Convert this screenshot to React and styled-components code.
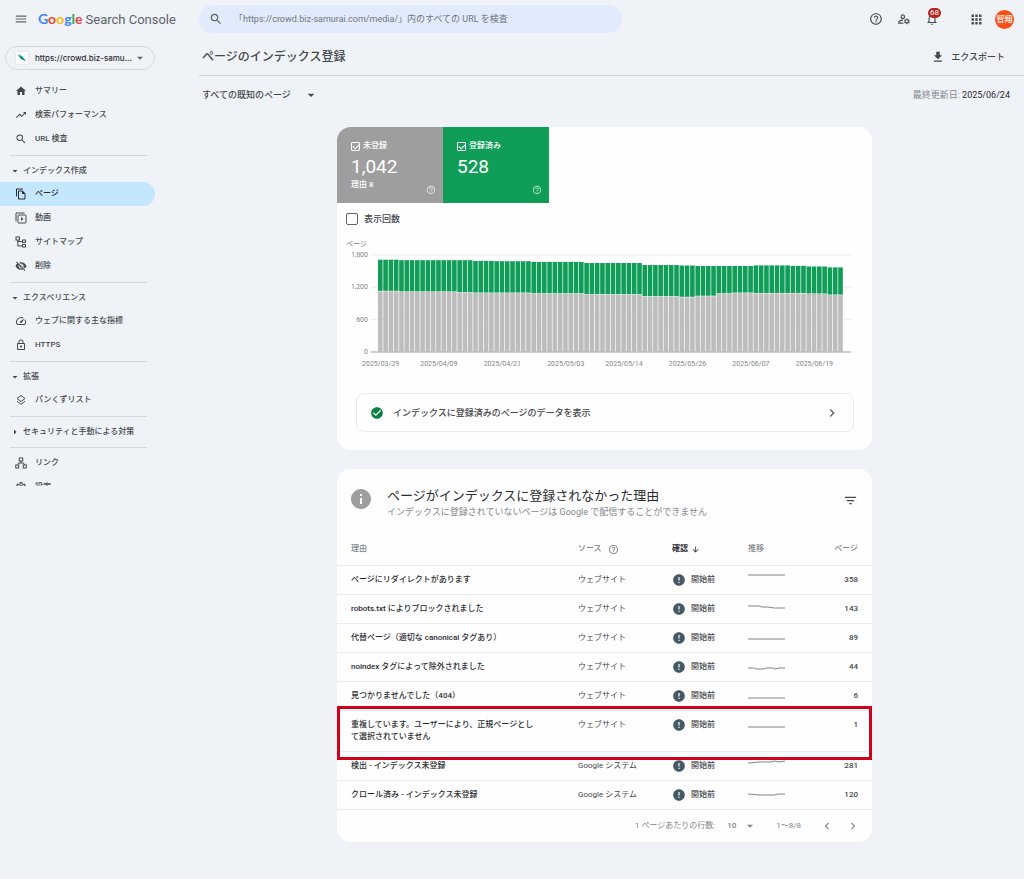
import React from "react";
import styled, { createGlobalStyle, css } from "styled-components";
import {
  MdApps,
  MdArrowDownward,
  MdArrowDropDown,
  MdCheckCircle,
  MdChevronLeft,
  MdChevronRight,
  MdError,
  MdFileDownload,
  MdFilterList,
  MdHelpOutline,
  MdHome,
  MdInfo,
  MdLockOutline,
  MdMenu,
  MdNotificationsNone,
  MdOutlineFileCopy,
  MdOutlineManageAccounts,
  MdOutlineSettings,
  MdSearch,
  MdSpeed,
  MdTrendingUp,
  MdVisibilityOff,
} from "react-icons/md";

const color = {
  page: "#eff3f8",
  card: "#fefefe",
  text: "#45484c",
  dark: "#2a2c30",
  muted: "#80868b",
  line: "#d3d7db",
  rowLine: "#e9ebee",
  green: "#0f9d58",
  grey: "#9e9e9e",
};

const sidebarWidth = "199px";

const GlobalStyle = createGlobalStyle`
  * {
    box-sizing: border-box;
  }
  body {
    margin: 0;
    background: ${color.page};
    color: ${color.text};
    font-family: Roboto, "Noto Sans CJK JP", sans-serif;
    font-size: 8px;
    line-height: 12px;
  }
  button, input, select {
    margin: 0;
    padding: 0;
    border: 0;
    background: none;
    color: inherit;
    font: inherit;
  }
  a {
    color: inherit;
    text-decoration: none;
  }
  svg {
    display: block;
    flex: none;
  }
`;

/* ---------- header ---------- */

const StyledHeader = styled.header`
  display: flex;
  align-items: center;
  height: 38px;
  padding-right: 10px;
`;

const StyledBrand = styled.div`
  display: flex;
  align-items: center;
  gap: 10px;
  width: ${sidebarWidth};
  padding-left: 14px;
  flex: none;
`;

const StyledLogo = styled.a`
  display: flex;
  align-items: baseline;
  gap: 3px;
  font-size: 13px;
  line-height: 20px;
  color: #5f6368;
  white-space: nowrap;
`;

const StyledGoogle = styled.span`
  font-family: Lato, sans-serif;
  font-size: 14px;
  font-weight: 700;
`;

const StyledLetter = styled.span`
  color: ${({ $color }) => $color};
`;

const StyledSearch = styled.label`
  display: flex;
  align-items: center;
  gap: 11px;
  flex: 0 1 423px;
  height: 28px;
  padding: 0 10px;
  border-radius: 14px;
  background: #e1ebfb;
  color: #5f6368;
`;

const StyledSearchInput = styled.input`
  flex: 1;
  min-width: 0;
  font-size: 9px;
  outline: 0;

  &::placeholder {
    color: #72777c;
    opacity: 1;
  }
`;

const StyledTools = styled.div`
  display: flex;
  align-items: center;
  gap: 14px;
  margin-left: auto;
  color: #4b4f53;
`;

const StyledIconButton = styled.button`
  position: relative;
  display: flex;
  align-items: center;
  justify-content: center;
  min-width: 14px;
  min-height: 14px;
  color: ${({ $color }) => $color || "inherit"};
`;

const StyledBadge = styled.span`
  position: absolute;
  top: -4px;
  left: 3px;
  padding: 0 2px;
  border-radius: 5px;
  background: #b3261e;
  color: #fff;
  font-size: 8px;
  line-height: 10px;
`;

const StyledAvatar = styled.button`
  width: 19px;
  height: 19px;
  border-radius: 50%;
  background: #fb4f14;
  color: #fff;
  font-size: 8px;
  font-weight: 500;
  line-height: 19px;
  white-space: nowrap;
`;

const StyledAccount = styled.div`
  display: flex;
  align-items: center;
  gap: 11px;
  margin-left: 16px;
`;

/* ---------- sidebar ---------- */

const StyledBody = styled.div`
  display: flex;
  align-items: flex-start;
`;

const StyledSidebar = styled.nav`
  width: ${sidebarWidth};
  flex: none;
  max-height: 448px;
  overflow: hidden;
  padding: 8px 44px 0 0;
  font-weight: 500;
`;

const StyledProperty = styled.button`
  display: flex;
  align-items: center;
  width: 150px;
  height: 24px;
  margin: 0 0 9px 5px;
  padding: 0 7px 0 9px;
  border: 1px solid #d5d8dc;
  border-radius: 12px;
  color: ${color.dark};
  font-family: Inter, sans-serif;
  font-weight: 500;
  text-align: left;
`;

const StyledPropertyName = styled.span`
  flex: 1;
  padding-left: 6px;
  white-space: nowrap;
`;

const StyledNavItem = styled.a`
  display: flex;
  align-items: center;
  gap: 8px;
  height: 24px;
  padding-left: 15px;
  border-radius: 0 12px 12px 0;
  ${({ $active }) => $active && css`
    background: #c2e7ff;
    color: ${color.dark};
  `}
`;

const StyledNavHeading = styled.button`
  display: flex;
  align-items: center;
  gap: 2px;
  height: 23px;
  padding-left: 9px;
  white-space: nowrap;
`;

const StyledDivider = styled.hr`
  height: 1px;
  margin: 4px 8px 3px 10px;
  border: 0;
  background: ${color.line};
`;

/* ---------- main column ---------- */

const StyledMain = styled.main`
  flex: 1;
  min-width: 0;
`;

const StyledTitleBar = styled.div`
  display: flex;
  align-items: center;
  justify-content: space-between;
  height: 38px;
  padding: 0 19px 0 3px;
  border-bottom: 1px solid ${color.line};
`;

const StyledPageTitle = styled.h1`
  margin: 0;
  font-size: 12px;
  font-weight: 500;
`;

const StyledExport = styled.button`
  display: flex;
  align-items: center;
  gap: 6px;
  font-size: 9px;
  font-weight: 500;
`;

const StyledFilterBar = styled.div`
  display: flex;
  align-items: center;
  justify-content: space-between;
  height: 38px;
  padding: 0 14px 0 3px;
  font-size: 9px;
`;

const StyledFilter = styled.button`
  display: flex;
  align-items: center;
  gap: 12px;
  font-weight: 500;
`;

const StyledUpdated = styled.span`
  color: ${color.muted};

  time {
    color: ${color.dark};
  }
`;

const StyledCards = styled.div`
  display: flex;
  flex-direction: column;
  gap: 19px;
  padding: 13px 14px 38px 0;
`;

const StyledCard = styled.section`
  width: 100%;
  max-width: 535px;
  margin: 0 auto;
  border-radius: 14px;
  background: ${color.card};
  overflow: hidden;
`;

/* ---------- chart card ---------- */

const StyledMetrics = styled.div`
  display: flex;
`;

const StyledMetric = styled.label`
  display: grid;
  grid-template-columns: 9px 1fr 10px;
  grid-template-rows: 12px 24px 12px;
  column-gap: 3px;
  align-items: center;
  flex: 0 1 106px;
  height: 76px;
  padding: 13px 7px 0 14px;
  background: ${({ $color }) => $color};
  color: #fff;
  font-weight: 500;
`;

const StyledCheck = styled.input`
  position: relative;
  appearance: none;
  width: ${({ $size }) => $size}px;
  height: ${({ $size }) => $size}px;
  border: 1px solid currentColor;
  border-radius: 1px;

  &:checked::after {
    content: "";
    position: absolute;
    top: 1px;
    left: 1px;
    width: 5px;
    height: 3px;
    border: solid currentColor;
    border-width: 0 0 1px 1px;
    transform: rotate(-45deg);
  }
`;

const StyledMetricName = styled.span`
  grid-column: 2 / 4;
`;

const StyledMetricValue = styled.span`
  grid-column: 1 / 4;
  padding-top: 6px;
  font-size: 19px;
  font-weight: 400;
  line-height: 24px;
`;

const StyledMetricNote = styled.span`
  grid-column: 1 / 3;
  padding-top: 6px;
`;

const StyledMetricHelp = styled.span`
  grid-column: 3;
  padding-top: 16px;
  opacity: 0.7;
`;

const StyledImpressions = styled.label`
  display: flex;
  align-items: center;
  gap: 6px;
  padding: 10px 9px 1px;
  font-size: 9px;
  font-weight: 500;
`;

const StyledBox = styled(StyledCheck)`
  border-color: #5f6368;
  border-radius: 2px;
`;

const StyledChart = styled.svg`
  width: 100%;
  font-size: 7px;
  fill: #80868b;
`;

const StyledDataLink = styled.a`
  display: flex;
  align-items: center;
  gap: 9px;
  height: 39px;
  margin: 21px 18px 18px 19px;
  padding: 0 13px;
  border: 1px solid #e8eaed;
  border-radius: 8px;
  font-size: 9px;
  font-weight: 500;

  span {
    flex: 1;
  }
`;

/* ---------- reasons card ---------- */

const StyledReasonsHeader = styled.div`
  display: flex;
  align-items: flex-start;
  gap: 14px;
  padding: 18px 14px 0 12px;
`;

const StyledReasonsTitles = styled.div`
  flex: 1;
`;

const StyledReasonsTitle = styled.h2`
  margin: 0;
  font-size: 13px;
  font-weight: 400;
  line-height: 18px;
  color: ${color.dark};
`;

const StyledReasonsText = styled.p`
  margin: 0;
  font-size: 9px;
  line-height: 14px;
  color: ${color.muted};
`;

const StyledFilterButton = styled(StyledIconButton)`
  margin-top: 6px;
`;

const StyledTable = styled.table`
  width: 100%;
  border-collapse: separate;
  border-spacing: 0;
  table-layout: fixed;
`;

const StyledTh = styled.th`
  width: ${({ $width }) => $width || "auto"};
  height: 47px;
  padding: 14px 0 0;
  border-bottom: 1px solid ${color.rowLine};
  color: ${({ $sorted }) => ($sorted ? color.dark : color.muted)};
  font-weight: ${({ $sorted }) => ($sorted ? 700 : 500)};
  text-align: left;

  &:first-child {
    padding-left: 14px;
  }
  &:last-child {
    padding-right: 14px;
    text-align: right;
  }
`;

const StyledTd = styled.td`
  padding: 8px 0;
  border-bottom: 1px solid ${color.rowLine};
  vertical-align: top;

  &:first-child {
    padding: 8px 39px 8px 14px;
    color: ${color.dark};
    font-weight: 500;
  }
  &:last-child {
    padding-right: 14px;
    text-align: right;
    font-weight: 500;
  }
`;

const StyledRow = styled.tr`
  position: relative;
`;

const StyledMark = styled.span`
  position: absolute;
  inset: -5px 0 -8px;
  border: 3px solid #d0021b;
  pointer-events: none;
`;

const StyledInline = styled.span`
  display: flex;
  align-items: center;
  gap: ${({ $gap }) => $gap}px;
  height: 12px;
  font-weight: ${({ $bold }) => ($bold ? 500 : "inherit")};
`;

const StyledPager = styled.div`
  display: flex;
  align-items: center;
  justify-content: flex-end;
  height: 32px;
  padding: 0 12px;
  color: ${color.muted};
`;

const StyledRowsLabel = styled.label`
  display: flex;
  align-items: center;
`;

const StyledSelect = styled.select`
  appearance: none;
  width: 16px;
  margin-left: 12px;
  font-weight: 500;
`;

const StyledRange = styled.span`
  margin: 0 19px;
`;

const StyledPagerButtons = styled.span`
  display: flex;
  gap: 12px;
`;

/* ---------- drawn icons ---------- */

function LineIcon({ children }) {
  return (
    <svg width="12" height="12" viewBox="0 0 24 24" fill="none" stroke="currentColor" strokeWidth="2">
      {children}
    </svg>
  );
}

function VideoIcon() {
  return (
    <LineIcon>
      <path d="M2 19V2h17" />
      <rect x="6" y="6" width="16" height="16" rx="1" />
      <path d="M12 10v8l5-4z" fill="currentColor" stroke="none" />
    </LineIcon>
  );
}

function SitemapIcon() {
  return (
    <LineIcon>
      <rect x="2" y="2" width="7" height="6" />
      <rect x="15" y="8" width="6" height="5" />
      <rect x="15" y="17" width="6" height="5" />
      <path d="M5.500 8v12H15M5.500 11H15" />
    </LineIcon>
  );
}

function LayersIcon() {
  return (
    <LineIcon>
      <path d="M12 3l8 6-8 6-8-6z" />
      <path d="M4 14.500l8 6 8-6" />
    </LineIcon>
  );
}

function LinksIcon() {
  return (
    <LineIcon>
      <rect x="8.500" y="2" width="7" height="6" />
      <rect x="1.500" y="16" width="6" height="6" />
      <rect x="16.500" y="16" width="6" height="6" />
      <path d="M12 8v4M5 16l2-4h10l2 4" />
    </LineIcon>
  );
}

function SiteIcon() {
  return (
    <svg width="14" height="14" viewBox="0 0 14 14">
      <rect x="0.500" y="0.500" width="13" height="13" rx="1" fill="#fff" stroke="#e6e9ec" />
      <path d="M3 3.500l4 1.500 4 5-5-2z" fill="#17a39a" />
      <path d="M3 3.500l3 4.500 5 2z" fill="#0b8a83" />
    </svg>
  );
}

/* ---------- data ---------- */

const logo = [
  ["G", "#4285f4"],
  ["o", "#ea4335"],
  ["o", "#fbbc04"],
  ["g", "#4285f4"],
  ["l", "#34a853"],
  ["e", "#ea4335"],
];

const navGroups = [
  {
    items: [
      { label: "サマリー", icon: <MdHome size={12} /> },
      { label: "検索パフォーマンス", icon: <MdTrendingUp size={12} /> },
      { label: "URL 検査", icon: <MdSearch size={12} /> },
    ],
  },
  {
    title: "インデックス作成",
    items: [
      { label: "ページ", icon: <MdOutlineFileCopy size={12} />, active: true },
      { label: "動画", icon: <VideoIcon /> },
      { label: "サイトマップ", icon: <SitemapIcon /> },
      { label: "削除", icon: <MdVisibilityOff size={12} /> },
    ],
  },
  {
    title: "エクスペリエンス",
    items: [
      { label: "ウェブに関する主な指標", icon: <MdSpeed size={12} /> },
      { label: "HTTPS", icon: <MdLockOutline size={12} /> },
    ],
  },
  {
    title: "拡張",
    items: [{ label: "パンくずリスト", icon: <LayersIcon /> }],
  },
  { title: "セキュリティと手動による対策", closed: true, items: [] },
  {
    items: [
      { label: "リンク", icon: <LinksIcon /> },
      { label: "設定", icon: <MdOutlineSettings size={12} /> },
    ],
  },
];

// days in a row with the same counts: [days, total, not indexed]
const runs = [
  [4, 1713, 1126],
  [11, 1704, 1115],
  [3, 1704, 1100],
  [4, 1691, 1093],
  [7, 1685, 1093],
  [10, 1672, 1080],
  [11, 1652, 1063],
  [7, 1614, 1026],
  [3, 1605, 1015],
  [4, 1596, 1035],
  [3, 1596, 1080],
  [4, 1596, 1093],
  [7, 1607, 1086],
  [3, 1598, 1086],
  [4, 1587, 1076],
  [3, 1570, 1056],
];

const days = runs.flatMap(([count, total, missing]) =>
  Array.from({ length: count }, () => ({ total, missing }))
);

const ticks = [
  [0, "2025/03/29"],
  [11, "2025/04/09"],
  [23, "2025/04/21"],
  [35, "2025/05/03"],
  [46, "2025/05/14"],
  [58, "2025/05/26"],
  [70, "2025/06/07"],
  [82, "2025/06/19"],
];

const website = "ウェブサイト";
const google = "Google システム";

const reasons = [
  { name: "ページにリダイレクトがあります", source: website, pages: 358, trend: "0,1 37,1" },
  { name: "robots.txt によりブロックされました", source: website, pages: 143, trend: "0,3 11,3 14,4 20,4 26,5 37,5" },
  { name: "代替ページ（適切な canonical タグあり）", source: website, pages: 89, trend: "0,7 37,7" },
  { name: "noindex タグによって除外されました", source: website, pages: 44, trend: "0,7 6,7 8,8 15,8 18,7 25,7 27,8 31,7 37,7" },
  { name: "見つかりませんでした（404）", source: website, pages: 6, trend: "0,8 37,8" },
  { name: "重複しています。ユーザーにより、正規ページとして選択されていません", source: website, pages: 1, trend: "0,8 37,8", marked: true },
  { name: "検出 - インデックス未登録", source: google, pages: 281, trend: "0,3 12,2 22,2 27,1 31,2 37,1" },
  { name: "クロール済み - インデックス未登録", source: google, pages: 120, trend: "0,5 12,6 26,6 30,5 37,5" },
];

/* ---------- components ---------- */

function Header() {
  return (
    <StyledHeader>
      <StyledBrand>
        <StyledIconButton aria-label="メニュー" $color="#5f6368"><MdMenu size={14} /></StyledIconButton>
        <StyledLogo href="#">
          <StyledGoogle>
            {logo.map(([letter, fill], i) => (
              <StyledLetter key={i} $color={fill}>{letter}</StyledLetter>
            ))}
          </StyledGoogle>
          Search Console
        </StyledLogo>
      </StyledBrand>
      <StyledSearch>
        <MdSearch size={14} />
        <StyledSearchInput
          aria-label="URL 検査"
          placeholder="「https://crowd.biz-samurai.com/media/」内のすべての URL を検査"
        />
      </StyledSearch>
      <StyledTools>
        <StyledIconButton aria-label="ヘルプ"><MdHelpOutline size={14} /></StyledIconButton>
        <StyledIconButton aria-label="ユーザー設定"><MdOutlineManageAccounts size={14} /></StyledIconButton>
        <StyledIconButton aria-label="通知">
          <MdNotificationsNone size={14} />
          <StyledBadge>68</StyledBadge>
        </StyledIconButton>
        <StyledAccount>
          <StyledIconButton aria-label="アプリ"><MdApps size={15} /></StyledIconButton>
          <StyledAvatar>智翔</StyledAvatar>
        </StyledAccount>
      </StyledTools>
    </StyledHeader>
  );
}

function Sidebar() {
  return (
    <StyledSidebar>
      <StyledProperty>
        <SiteIcon />
        <StyledPropertyName>https://crowd.biz-samu...</StyledPropertyName>
        <MdArrowDropDown size={14} color="#5f6368" />
      </StyledProperty>
      {navGroups.map(({ title, closed, items }, i) => (
        <React.Fragment key={i}>
          {i > 0 && <StyledDivider />}
          {title && (
            <StyledNavHeading aria-expanded={!closed}>
              {closed
                ? <MdArrowDropDown size={12} transform="rotate(-90)" />
                : <MdArrowDropDown size={12} />}
              {title}
            </StyledNavHeading>
          )}
          {items.map(({ label, icon, active }) => (
            <StyledNavItem key={label} href="#" $active={active}>
              {icon}
              {label}
            </StyledNavItem>
          ))}
        </React.Fragment>
      ))}
    </StyledSidebar>
  );
}

function Metric({ name, value, note, fill }) {
  return (
    <StyledMetric $color={fill}>
      <StyledCheck type="checkbox" defaultChecked $size={9} />
      <StyledMetricName>{name}</StyledMetricName>
      <StyledMetricValue>{value}</StyledMetricValue>
      <StyledMetricNote>{note}</StyledMetricNote>
      <StyledMetricHelp><MdHelpOutline size={10} /></StyledMetricHelp>
    </StyledMetric>
  );
}

function Chart() {
  const base = 126;
  const left = 41;
  const step = 465.5 / days.length;
  const y = (value) => base - (value * 97) / 1800;

  return (
    <StyledChart viewBox="0 0 535 146" role="img" aria-label="ページ">
      <text x="9" y="20">ページ</text>
      {[1800, 1200, 600, 0].map((value) => (
        <g key={value}>
          <path d={`M34 ${y(value)}H514`} stroke={value ? "#eeeeee" : "#9e9e9e"} />
          <text x="31" y={y(value) + 2} textAnchor="end">{value.toLocaleString("en-US")}</text>
        </g>
      ))}
      {days.map(({ total, missing }, i) => (
        <g key={i}>
          <rect x={left + i * step} y={y(total)} width={step - 0.7} height={y(missing) - y(total) - 0.5} fill={color.green} />
          <rect x={left + i * step} y={y(missing)} width={step - 0.7} height={base - y(missing)} fill="#bdbdbd" />
        </g>
      ))}
      {ticks.map(([day, label]) => (
        <text key={label} x={left + (day + 0.5) * step} y={base + 14} textAnchor="middle">{label}</text>
      ))}
    </StyledChart>
  );
}

function ChartCard() {
  return (
    <StyledCard>
      <StyledMetrics>
        <Metric name="未登録" value="1,042" note="理由 8" fill={color.grey} />
        <Metric name="登録済み" value="528" fill={color.green} />
      </StyledMetrics>
      <StyledImpressions>
        <StyledBox type="checkbox" $size={12} />
        表示回数
      </StyledImpressions>
      <Chart />
      <StyledDataLink href="#">
        <MdCheckCircle size={14} color="#0b8043" />
        <span>インデックスに登録済みのページのデータを表示</span>
        <MdChevronRight size={16} color="#5f6368" />
      </StyledDataLink>
    </StyledCard>
  );
}

function ReasonRow({ name, source, pages, trend, marked }) {
  return (
    <StyledRow>
      <StyledTd>{name}</StyledTd>
      <StyledTd>{source}</StyledTd>
      <StyledTd>
        <StyledInline $gap={5} $bold>
          <MdError size={14} color="#455a64" />
          開始前
        </StyledInline>
      </StyledTd>
      <StyledTd>
        <svg width="38" height="12" viewBox="0 0 38 12" overflow="visible">
          <polyline points={trend} fill="none" stroke="#80868b" />
        </svg>
      </StyledTd>
      <StyledTd>
        {pages}
        {marked && <StyledMark />}
      </StyledTd>
    </StyledRow>
  );
}

function ReasonsCard() {
  return (
    <StyledCard>
      <StyledReasonsHeader>
        <MdInfo size={24} color={color.grey} />
        <StyledReasonsTitles>
          <StyledReasonsTitle>ページがインデックスに登録されなかった理由</StyledReasonsTitle>
          <StyledReasonsText>インデックスに登録されていないページは Google で配信することができません</StyledReasonsText>
        </StyledReasonsTitles>
        <StyledFilterButton aria-label="フィルタ"><MdFilterList size={15} /></StyledFilterButton>
      </StyledReasonsHeader>
      <StyledTable>
        <thead>
          <tr>
            <StyledTh>理由</StyledTh>
            <StyledTh $width="94px">
              <StyledInline $gap={6}>ソース <MdHelpOutline size={11} /></StyledInline>
            </StyledTh>
            <StyledTh $width="76px" $sorted>
              <StyledInline $gap={3}>確認 <MdArrowDownward size={9} /></StyledInline>
            </StyledTh>
            <StyledTh $width="60px">推移</StyledTh>
            <StyledTh $width="64px">ページ</StyledTh>
          </tr>
        </thead>
        <tbody>
          {reasons.map((reason) => <ReasonRow key={reason.name} {...reason} />)}
        </tbody>
      </StyledTable>
      <StyledPager>
        <StyledRowsLabel>
          1 ページあたりの行数:
          <StyledSelect defaultValue="10">
            <option>10</option>
            <option>25</option>
            <option>50</option>
          </StyledSelect>
          <MdArrowDropDown size={14} />
        </StyledRowsLabel>
        <StyledRange>1〜8/8</StyledRange>
        <StyledPagerButtons>
          <StyledIconButton aria-label="前へ"><MdChevronLeft size={14} /></StyledIconButton>
          <StyledIconButton aria-label="次へ"><MdChevronRight size={14} /></StyledIconButton>
        </StyledPagerButtons>
      </StyledPager>
    </StyledCard>
  );
}

function App() {
  return (
    <>
      <GlobalStyle />
      <Header />
      <StyledBody>
        <Sidebar />
        <StyledMain>
          <StyledTitleBar>
            <StyledPageTitle>ページのインデックス登録</StyledPageTitle>
            <StyledExport>
              <MdFileDownload size={14} />
              エクスポート
            </StyledExport>
          </StyledTitleBar>
          <StyledFilterBar>
            <StyledFilter>
              すべての既知のページ
              <MdArrowDropDown size={16} />
            </StyledFilter>
            <StyledUpdated>最終更新日: <time>2025/06/24</time></StyledUpdated>
          </StyledFilterBar>
          <StyledCards>
            <ChartCard />
            <ReasonsCard />
          </StyledCards>
        </StyledMain>
      </StyledBody>
    </>
  );
}

export default App;
